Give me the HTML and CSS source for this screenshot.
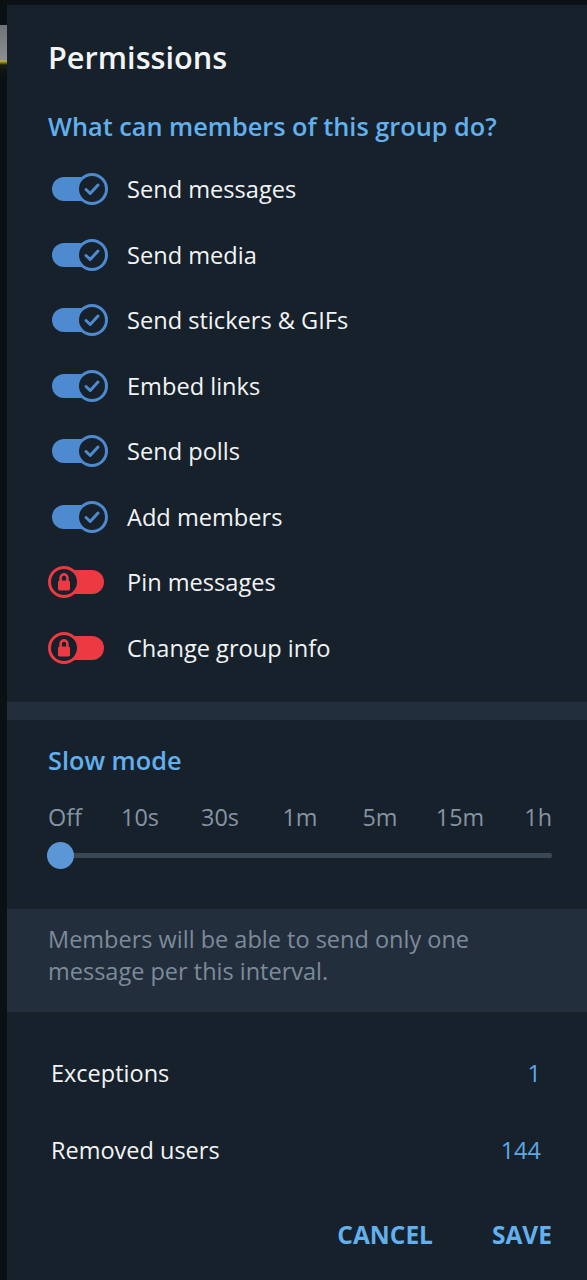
FILE: index.html
```html
<!DOCTYPE html>
<html>
<head>
<meta charset="utf-8">
<link rel="stylesheet" href="styles.css">
</head>
<body>
<div class="screen">
  <div class="backdrop">
    <div class="bd-avatar"></div>
  </div>
  <div class="dialog">
    <h1 class="title">Permissions</h1>
    <h2 class="section-title">What can members of this group do?</h2>
    <div class="perm-list">
      <div class="perm-row">
        <div class="toggle on"><div class="track"></div><svg class="knob" viewBox="0 0 32 32"><circle cx="16" cy="16" r="14.5" fill="#17212b" stroke="#4d8ad0" stroke-width="3"/><path d="M10 16.5 L14.2 20.5 L22 12" fill="none" stroke="#4d8ad0" stroke-width="3" stroke-linecap="round" stroke-linejoin="round"/></svg></div>
        <span class="perm-label">Send messages</span>
      </div>
      <div class="perm-row">
        <div class="toggle on"><div class="track"></div><svg class="knob" viewBox="0 0 32 32"><circle cx="16" cy="16" r="14.5" fill="#17212b" stroke="#4d8ad0" stroke-width="3"/><path d="M10 16.5 L14.2 20.5 L22 12" fill="none" stroke="#4d8ad0" stroke-width="3" stroke-linecap="round" stroke-linejoin="round"/></svg></div>
        <span class="perm-label">Send media</span>
      </div>
      <div class="perm-row">
        <div class="toggle on"><div class="track"></div><svg class="knob" viewBox="0 0 32 32"><circle cx="16" cy="16" r="14.5" fill="#17212b" stroke="#4d8ad0" stroke-width="3"/><path d="M10 16.5 L14.2 20.5 L22 12" fill="none" stroke="#4d8ad0" stroke-width="3" stroke-linecap="round" stroke-linejoin="round"/></svg></div>
        <span class="perm-label">Send stickers &amp; GIFs</span>
      </div>
      <div class="perm-row">
        <div class="toggle on"><div class="track"></div><svg class="knob" viewBox="0 0 32 32"><circle cx="16" cy="16" r="14.5" fill="#17212b" stroke="#4d8ad0" stroke-width="3"/><path d="M10 16.5 L14.2 20.5 L22 12" fill="none" stroke="#4d8ad0" stroke-width="3" stroke-linecap="round" stroke-linejoin="round"/></svg></div>
        <span class="perm-label">Embed links</span>
      </div>
      <div class="perm-row">
        <div class="toggle on"><div class="track"></div><svg class="knob" viewBox="0 0 32 32"><circle cx="16" cy="16" r="14.5" fill="#17212b" stroke="#4d8ad0" stroke-width="3"/><path d="M10 16.5 L14.2 20.5 L22 12" fill="none" stroke="#4d8ad0" stroke-width="3" stroke-linecap="round" stroke-linejoin="round"/></svg></div>
        <span class="perm-label">Send polls</span>
      </div>
      <div class="perm-row">
        <div class="toggle on"><div class="track"></div><svg class="knob" viewBox="0 0 32 32"><circle cx="16" cy="16" r="14.5" fill="#17212b" stroke="#4d8ad0" stroke-width="3"/><path d="M10 16.5 L14.2 20.5 L22 12" fill="none" stroke="#4d8ad0" stroke-width="3" stroke-linecap="round" stroke-linejoin="round"/></svg></div>
        <span class="perm-label">Add members</span>
      </div>
      <div class="perm-row">
        <div class="toggle off"><svg class="knob" viewBox="0 0 32 32"><circle cx="16" cy="16" r="14.5" fill="#17212b" stroke="#ec3942" stroke-width="3"/><path d="M12.6 15 V11.8 a3.4 3.4 0 0 1 6.8 0 V15" fill="none" stroke="#ec3942" stroke-width="2.6"/><rect x="10" y="14.4" width="12" height="10" rx="1.6" fill="#ec3942"/></svg><div class="track"></div></div>
        <span class="perm-label">Pin messages</span>
      </div>
      <div class="perm-row">
        <div class="toggle off"><svg class="knob" viewBox="0 0 32 32"><circle cx="16" cy="16" r="14.5" fill="#17212b" stroke="#ec3942" stroke-width="3"/><path d="M12.6 15 V11.8 a3.4 3.4 0 0 1 6.8 0 V15" fill="none" stroke="#ec3942" stroke-width="2.6"/><rect x="10" y="14.4" width="12" height="10" rx="1.6" fill="#ec3942"/></svg><div class="track"></div></div>
        <span class="perm-label">Change group info</span>
      </div>
    </div>

    <div class="divider"></div>

    <h2 class="section-title slow-title">Slow mode</h2>
    <div class="slow-labels">
      <span class="sl first">Off</span>
      <span class="sl">10s</span>
      <span class="sl">30s</span>
      <span class="sl">1m</span>
      <span class="sl">5m</span>
      <span class="sl">15m</span>
      <span class="sl last">1h</span>
    </div>
    <div class="slider">
      <div class="slider-knob"></div>
      <div class="slider-track"></div>
    </div>

    <div class="info-box">Members will be able to send only one<br>message per this interval.</div>

    <div class="link-list">
      <div class="link-row"><span class="link-label">Exceptions</span><span class="link-value">1</span></div>
      <div class="link-row"><span class="link-label">Removed users</span><span class="link-value">144</span></div>
    </div>

    <div class="buttons">
      <span class="btn">CANCEL</span>
      <span class="btn">SAVE</span>
    </div>
  </div>
</div>
</body>
</html>
```

FILE: styles.css
```css
html, body {
  margin: 0;
  padding: 0;
  background: #0c1117;
}
body {
  font-family: "Open Sans", "Noto Sans", sans-serif;
  width: 587px;
  height: 1280px;
  overflow: hidden;
}
.screen {
  display: flex;
  height: 1280px;
  padding-top: 5px;
  box-sizing: border-box;
}
.backdrop {
  width: 7px;
  flex: none;
  margin-top: -5px;
  background: #0b1015;
}
.bd-avatar {
  margin-top: 25px;
  height: 50px;
  background: linear-gradient(to bottom, #6f7377 0%, #8c8f92 70%, #c9b622 72%, #1a1d12 80%, #0b1015 100%);
  border-radius: 0 0 6px 0;
}
.dialog {
  flex: 1;
  background: #17212b;
  padding: 34px 35px 0 0;
  box-sizing: border-box;
  color: #f2f4f6;
}
.title {
  margin: 0 0 0 41px;
  font-size: 30.7px;
  line-height: 36px;
  font-weight: 600;
  color: #f2f4f6;
}
.section-title {
  margin: 35px 0 0 41px;
  font-size: 25.3px;
  line-height: 32px;
  font-weight: 600;
  color: #62b0ee;
}
.perm-list {
  margin-top: 14.5px;
  margin-left: 41px;
  display: flex;
  flex-direction: column;
}
.perm-row {
  height: 65.5px;
  display: flex;
  align-items: center;
}
.toggle {
  width: 60px;
  height: 32px;
  display: flex;
  align-items: center;
  flex: none;
}
.track {
  width: 52px;
  height: 24px;
  border-radius: 12px;
  flex: none;
}
.knob {
  width: 32px;
  height: 32px;
  flex: none;
  position: relative;
  z-index: 1;
  display: block;
}
.toggle.on .track {
  margin-left: 4px;
  background: #4d8ad0;
}
.toggle.on .knob {
  margin-left: -28px;
}
.toggle.off .track {
  margin-left: -28px;
  background: #ec3942;
}
.perm-label {
  margin-left: 19px;
  font-size: 23.6px;
  line-height: 32px;
  color: #f2f4f6;
}
.divider {
  margin-top: 21.5px;
  margin-right: -35px;
  height: 18px;
  background: #232e3c;
}
.slow-title {
  margin-top: 24px;
}
.slow-labels {
  margin: 27px 0 0 41px;
  display: grid;
  grid-template-columns: 1fr repeat(5, 80px) 1fr;
  font-size: 23.4px;
  line-height: 28px;
  color: #8594a2;
}
.sl {
  text-align: center;
  white-space: nowrap;
}
.sl.first {
  text-align: left;
}
.sl.last {
  text-align: right;
}
.slider {
  margin: 10px 0 0 40px;
  height: 28px;
  display: flex;
  align-items: center;
}
.slider-knob {
  width: 27px;
  height: 27px;
  border-radius: 50%;
  background: #5b97d6;
  flex: none;
  position: relative;
  z-index: 1;
}
.slider-track {
  flex: 1;
  height: 5px;
  background: #3a4755;
  margin-left: -14px;
  border-radius: 2px;
}
.info-box {
  margin-top: 40px;
  margin-right: -35px;
  background: #232e3c;
  padding: 14px 0 25px 41px;
  font-size: 23.5px;
  line-height: 32px;
  color: #7c8b9a;
}
.link-list {
  margin: 22px 0 0 44px;
  display: flex;
  flex-direction: column;
}
.link-row {
  height: 77px;
  display: flex;
  align-items: center;
  justify-content: space-between;
  padding-right: 11px;
  font-size: 23.5px;
}
.link-label {
  color: #f2f4f6;
}
.link-value {
  color: #5ea9e4;
}
.buttons {
  margin-top: 30.5px;
  display: flex;
  justify-content: flex-end;
  gap: 59px;
  line-height: 32px;
}
.btn {
  font-size: 24.5px;
  font-weight: 700;
  color: #62b0ee;
}
```
